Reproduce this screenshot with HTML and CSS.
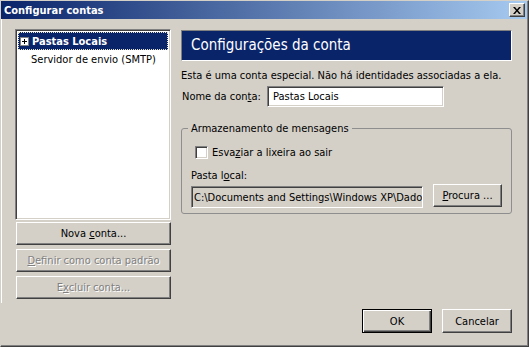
FILE: index.html
```html
<!DOCTYPE html>
<html lang="pt">
<head>
<meta charset="utf-8">
<title>Configurar contas</title>
<link rel="stylesheet" href="styles.css">
</head>
<body>
<div class="window">
  <div class="titlebar">
    <span class="title">Configurar contas</span>
    <button class="close" aria-label="Fechar">
      <svg width="8" height="7" viewBox="0 0 8 7"><path d="M0 0h2l2 2.5L6 0h2L5 3.5 8 7H6L4 4.5 2 7H0l3-3.5z" fill="#000"/></svg>
    </button>
  </div>
  <div class="content">
    <div class="left">
      <div class="listbox">
        <div class="item selected"><span class="plus"></span>Pastas Locais</div>
        <div class="item child">Servidor de envio (SMTP)</div>
      </div>
      <button class="btn side">Nova <u>c</u>onta...</button>
      <button class="btn side disabled"><u>D</u>efinir como conta padrão</button>
      <button class="btn side disabled">E<u>x</u>cluir conta...</button>
    </div>
    <div class="right">
      <div class="header">Configurações da conta</div>
      <p class="info">Esta é uma conta especial. Não há identidades associadas a ela.</p>
      <div class="name-row">
        <span class="label">Nome da con<u>t</u>a:</span>
        <div class="field name">Pastas Locais</div>
      </div>
      <fieldset class="group">
        <legend>Armazenamento de mensagens</legend>
        <div class="check-row"><span class="checkbox"></span><span>Esva<u>z</u>iar a lixeira ao sair</span></div>
        <div class="plain">Pasta l<u>o</u>cal:</div>
        <div class="path-row">
          <div class="field path"><span class="path-text">C:\Documents and Settings\Windows XP\Dados</span></div>
          <button class="btn browse"><u>P</u>rocura ...</button>
        </div>
      </fieldset>
    </div>
  </div>
  <div class="footer">
    <button class="btn dlg default">OK</button>
    <button class="btn dlg">Cancelar</button>
  </div>
</div>
</body>
</html>
```

FILE: styles.css
```css
html, body {
  margin: 0;
  padding: 0;
  background: #d4d0c8;
}
body {
  font-family: "DejaVu Sans Condensed", "DejaVu Sans", sans-serif;
  font-size: 11px;
  line-height: 13px;
  color: #000;
}
u { text-decoration: underline; text-underline-offset: 1px; }

.window {
  width: 529px;
  height: 347px;
  box-sizing: border-box;
  background: #d4d0c8;
  border-top: 1px solid #d4d0c8;
  border-left: 1px solid #d4d0c8;
  border-right: 1px solid #404040;
  border-bottom: 1px solid #404040;
  box-shadow: inset -1px -1px #808080;
  display: flex;
  flex-direction: column;
}

.titlebar {
  height: 18px;
  margin-right: 1px;
  display: flex;
  align-items: center;
  justify-content: space-between;
  background: linear-gradient(to right, #0a246a, #a6caf0);
  padding-left: 3px;
}
.title {
  color: #fff;
  font-weight: bold;
  font-size: 11px;
}
.close {
  width: 16px;
  height: 14px;
  margin-right: 2px;
  padding: 0;
  display: flex;
  align-items: center;
  justify-content: center;
  background: #d4d0c8;
  border: 1px solid;
  border-color: #fff #404040 #404040 #fff;
  box-shadow: inset -1px -1px #808080;
}

.content {
  display: flex;
  gap: 10px;
  padding: 10px 0 0 13px;
  border-left: 1px solid #fff;
}

.left {
  width: 156px;
  display: flex;
  flex-direction: column;
}
.listbox {
  height: 191px;
  box-sizing: border-box;
  background: #fff;
  border: 1px solid;
  border-color: #808080 #fff #fff #808080;
  box-shadow: inset 1px 1px #404040, inset -1px -1px #d4d0c8;
  padding: 2px 2px;
  margin-bottom: 2px;
}
.item {
  height: 18px;
  box-sizing: border-box;
  display: flex;
  align-items: center;
  white-space: nowrap;
}
.item.selected {
  background: #0a246a;
  color: #fff;
  font-weight: bold;
  border: 1px dotted #e8e4c8;
  padding-left: 1px;
}
.plus {
  width: 9px;
  height: 9px;
  box-sizing: border-box;
  border: 1px solid #808080;
  background: #fff linear-gradient(#000, #000) center / 5px 1px no-repeat;
  margin-right: 3px;
  position: relative;
}
.plus::after {
  content: "";
  position: absolute;
  left: 3px;
  top: 1px;
  width: 1px;
  height: 5px;
  background: #000;
}
.item.child {
  padding-left: 13px;
}

.btn {
  font-family: inherit;
  font-size: 11px;
  line-height: 13px;
  color: #000;
  background: #d4d0c8;
  border: 1px solid;
  border-color: #fff #404040 #404040 #fff;
  box-shadow: inset -1px -1px #808080;
  padding: 0;
  margin: 0;
  white-space: nowrap;
}
.btn.side {
  width: 155px;
  height: 23px;
  margin-left: 1px;
  margin-bottom: 4px;
}
.btn.disabled {
  color: #808080;
  text-shadow: 1px 1px #fff;
}

.right {
  width: 331px;
  display: flex;
  flex-direction: column;
}
.header {
  margin-top: 1px;
  height: 31px;
  box-sizing: border-box;
  background: #0a246a;
  border: 1px solid;
  border-color: #808080 #fff #fff #808080;
  color: #fff;
  font-size: 15px;
  line-height: 29px;
  padding-left: 9px;
}
.info {
  margin: 8px 0 0 0;
  white-space: nowrap;
}
.name-row {
  margin-top: 4px;
  display: flex;
  align-items: center;
}
.label {
  width: 85px;
  margin-left: 1px;
}
.field {
  box-sizing: border-box;
  border: 1px solid;
  border-color: #808080 #fff #fff #808080;
  box-shadow: inset 1px 1px #404040, inset -1px -1px #d4d0c8;
  white-space: nowrap;
  overflow: hidden;
  display: flex;
  align-items: center;
}
.field.name {
  width: 177px;
  height: 21px;
  background: #fff;
  padding-left: 5px;
}

.group {
  margin: 15px 0 0 0;
  padding: 0 9px 5px 9px;
  border: 1px solid #8e8e8e;
  border-radius: 3px;
  min-width: 0;
}
.group legend {
  padding: 0 3px;
  margin-left: -3px;
}
.check-row {
  margin-top: 11px;
  margin-left: 4px;
  display: flex;
  align-items: center;
  gap: 4px;
}
.checkbox {
  width: 13px;
  height: 13px;
  box-sizing: border-box;
  background: #fff;
  border: 1px solid;
  border-color: #808080 #fff #fff #808080;
  box-shadow: inset 1px 1px #404040, inset -1px -1px #d4d0c8;
}
.plain {
  margin-top: 10px;
}
.path-row {
  margin-top: 2px;
  display: flex;
  align-items: flex-start;
  gap: 10px;
}
.field.path {
  width: 232px;
  height: 22px;
  margin-top: 2px;
  background: #d4d0c8;
  padding-left: 2px;
}
.path-text {
  overflow: hidden;
  min-width: 0;
  flex: 1;
}
.btn.browse {
  width: 69px;
  height: 23px;
}

.footer {
  margin-top: auto;
  display: flex;
  justify-content: flex-end;
  gap: 10px;
  padding: 0 16px 13px 0;
}
.btn.dlg {
  width: 70px;
  height: 24px;
}
.btn.default {
  border: 1px solid #000;
  box-shadow: inset 1px 1px #fff, inset -1px -1px #404040, inset -2px -2px #808080;
}
```
